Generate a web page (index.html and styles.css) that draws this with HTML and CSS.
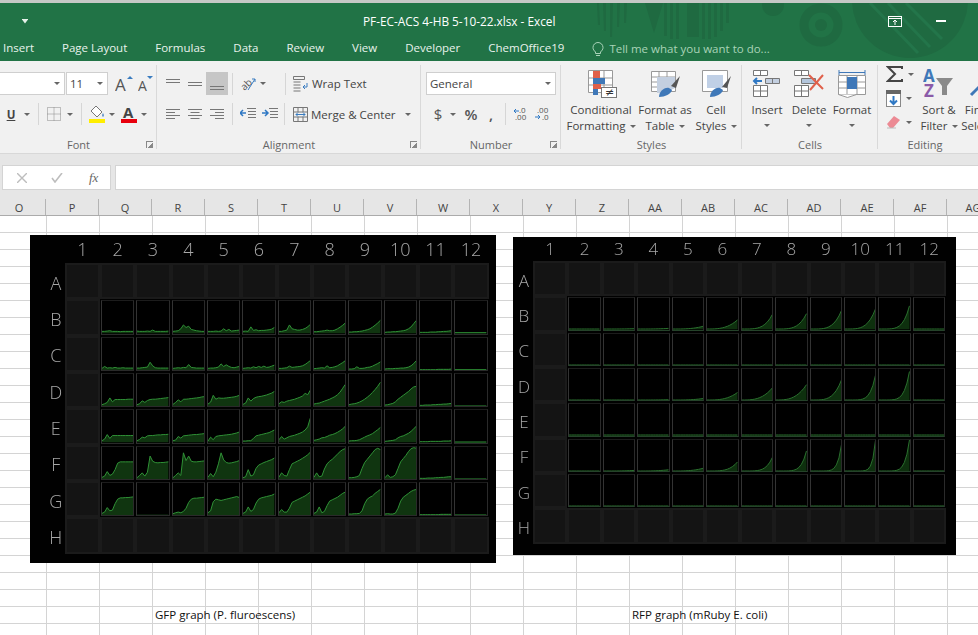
FILE: index.html
```html
<!DOCTYPE html>
<html lang="en">
<head>
    <meta charset="UTF-8">
    <meta name="viewport" content="width=device-width, initial-scale=1.0">
    <title>PF-EC-ACS 4-HB 5-10-22.xlsx - Excel</title>
    <link rel="stylesheet" href="styles.css">
</head>
<body>
    <header class="titlebar">
        <svg class="title-art" width="978" height="58" viewBox="0 0 978 58">
            <g fill="#1f6a41">
                <path d="M597 0h2l1 22h-2zM603 0h3v28h-2zM610 0h3l-1 34h-2zM617 0h3l-1 24h-2zM624 0h3l-1 20h-2z"/>
                <path d="M645 0h18l-9 30z"/>
                <path d="M664 0h3v33h-3zM670 0h3v36h-3zM676 0h3v36h-3zM687 0h12v34h-12zM702 0h3v36h-3zM708 0h3v36h-3zM714 0h3v34h-3zM720 0h3v28h-3zM726 0h3v20h-3z"/>
                <circle cx="773" cy="2" r="11"/>
            </g>
            <circle cx="821" cy="22" r="17" fill="none" stroke="#1f6a41" stroke-width="9"/>
            <circle cx="821" cy="22" r="6" fill="#1f6a41"/>
            <circle cx="910" cy="-3" r="58" fill="#1f6a41"/>
            <path d="M870 0l48 50M888 0l42 44M906 0l36 36" stroke="#23754a" stroke-width="3" fill="none"/>
        </svg>
        <div class="title-row">
            <span class="qat-arrow"></span>
            <span class="doc-title">PF-EC-ACS 4-HB 5-10-22.xlsx - Excel</span>
            <svg class="win-ribbon" width="14" height="11" viewBox="0 0 14 11">
                <rect x=".5" y=".5" width="13" height="10" fill="none" stroke="#fff"/>
                <path d="M0 2.500h14M7 9V4M5 6l2-2 2 2" stroke="#fff" fill="none"/>
            </svg>
            <span class="win-min"></span>
        </div>
        <nav class="tabs">
            <span>Insert</span>
            <span>Page Layout</span>
            <span>Formulas</span>
            <span>Data</span>
            <span>Review</span>
            <span>View</span>
            <span>Developer</span>
            <span>ChemOffice19</span>
            <span class="tell-me">
                <svg width="12" height="15" viewBox="0 0 12 15">
                    <path d="M3.500 10C2 8.500 1 7.500 1 5.500a5 5 0 0 1 10 0c0 2-1 3-2.500 4.500v1.500h-5zM4 13.500h4" fill="none" stroke="#a9d3b8"/>
                </svg>
                Tell me what you want to do...
            </span>
        </nav>
    </header>

    <section class="ribbon">
        <div class="group group-font">
            <div class="group-body">
                <div class="tool-row row-top">
                    <div class="combo combo-name"><span class="arrow"></span></div>
                    <div class="combo combo-size">11<span class="arrow"></span></div>
                    <svg class="font-grow" width="19" height="20" viewBox="0 0 19 20">
                        <text x="0" y="17" class="letter-big">A</text>
                        <path d="M12 5l3-3 3 3z" fill="#3a7cc0"/>
                    </svg>
                    <svg class="font-shrink" width="16" height="20" viewBox="0 0 16 20">
                        <text x="0" y="17" class="letter-small">A</text>
                        <path d="M9 2h6l-3 3z" fill="#3a7cc0"/>
                    </svg>
                </div>
                <div class="tool-row row-bottom">
                    <span class="underline-u">U</span>
                    <span class="arrow arrow-u"></span>
                    <span class="vsep sep-u"></span>
                    <svg class="icon-border" width="14" height="14" viewBox="0 0 14 14">
                        <path d="M.5.500h13v13H.5zM7 .5v13M.5 7h13" fill="none" stroke="#888" stroke-dasharray="1 1"/>
                    </svg>
                    <span class="arrow arrow-border"></span>
                    <span class="vsep sep-border"></span>
                    <svg class="icon-fill" width="16" height="19" viewBox="0 0 16 19">
                        <path d="M7 1l6 6-5 5-6-6z" fill="#fff" stroke="#777"/>
                        <path d="M14 8c1 2 1 3 0 4-1-1-1-2 0-4z" fill="#3a7cc0"/>
                        <rect y="14" width="16" height="4" fill="#ffee00"/>
                    </svg>
                    <span class="arrow arrow-fill"></span>
                    <svg class="icon-color" width="16" height="19" viewBox="0 0 16 19">
                        <text x="2" y="13" class="letter-color">A</text>
                        <rect y="14" width="16" height="4" fill="#e8000d"/>
                    </svg>
                    <span class="arrow arrow-color"></span>
                </div>
            </div>
            <div class="group-label">Font</div>
            <span class="launcher"></span>
        </div>

        <div class="group group-align">
            <div class="group-body">
                <div class="tool-row row-top">
                    <svg class="al-top" width="14" height="12" viewBox="0 0 14 12"><path d="M0 1.500h14M0 4.500h14" stroke="#777"/></svg>
                    <svg class="al-mid" width="14" height="12" viewBox="0 0 14 12"><path d="M0 4.500h14M0 7.500h14" stroke="#777"/></svg>
                    <span class="al-selected"><svg width="14" height="8" viewBox="0 0 14 8"><path d="M0 2.500h14M0 5.500h14" stroke="#777"/></svg></span>
                    <span class="vsep sep-al"></span>
                    <svg class="al-orient" width="17" height="17" viewBox="0 0 17 17">
                        <text x="0" y="13" class="letter-orient" transform="rotate(-45 6 9)">ab</text>
                        <path d="M8 15L15 4M12 4h3v3" stroke="#3a7cc0" fill="none"/>
                    </svg>
                    <span class="arrow arrow-orient"></span>
                    <span class="vsep sep-orient"></span>
                    <svg class="icon-wrap" width="16" height="16" viewBox="0 0 16 16">
                        <path d="M.5.5h11v3H.5zM.5 6h7M.5 9h7M.5 12h7M.5 15h7" fill="none" stroke="#777"/>
                        <path d="M10 11h4V7M10 11l2-2M10 11l2 2" fill="none" stroke="#3a7cc0"/>
                    </svg>
                    <span class="tool-text">Wrap Text</span>
                </div>
                <div class="tool-row row-bottom">
                    <svg class="al-left" width="14" height="11" viewBox="0 0 14 11"><path d="M0 .5h14M0 3.500h9M0 6.500h14M0 9.500h9" stroke="#777"/></svg>
                    <svg class="al-center" width="14" height="11" viewBox="0 0 14 11"><path d="M0 .5h14M2.500 3.500h9M0 6.500h14M2.500 9.500h9" stroke="#777"/></svg>
                    <svg class="al-right" width="14" height="11" viewBox="0 0 14 11"><path d="M0 .5h14M5 3.500h9M0 6.500h14M5 9.500h9" stroke="#777"/></svg>
                    <span class="vsep sep-al2"></span>
                    <svg class="in-dec" width="16" height="12" viewBox="0 0 16 12"><path d="M7 .5h9M8 3.500h8M8 6.500h8M8 9.500h8" fill="none" stroke="#777"/><path d="M0 5h6M3 2L0 5l3 3" fill="none" stroke="#2f78c4" stroke-width="1.500"/></svg>
                    <svg class="in-inc" width="16" height="12" viewBox="0 0 16 12"><path d="M7 .5h9M8 3.500h8M8 6.500h8M8 9.500h8" fill="none" stroke="#777"/><path d="M0 5h6M3 2l3 3-3 3" fill="none" stroke="#2f78c4" stroke-width="1.500"/></svg>
                    <span class="vsep sep-in"></span>
                    <svg class="icon-merge" width="15" height="15" viewBox="0 0 15 15">
                        <path d="M.5.5h14v14H.5zM.5 5h14M.5 10h14M5 .5V5M10 .5V5M5 10v4.500M10 10v4.500" fill="none" stroke="#777"/>
                        <path d="M3 7.500h9M3 7.500l2-2M3 7.500l2 2M12 7.500l-2-2M12 7.500l-2 2" fill="none" stroke="#3a7cc0"/>
                    </svg>
                    <span class="tool-text">Merge &amp; Center</span>
                    <span class="arrow arrow-merge"></span>
                </div>
            </div>
            <div class="group-label">Alignment</div>
            <span class="launcher"></span>
        </div>

        <div class="group group-number">
            <div class="group-body">
                <div class="tool-row row-top">
                    <div class="combo combo-format">General<span class="arrow"></span></div>
                </div>
                <div class="tool-row row-bottom">
                    <span class="num-sign num-dollar">$</span>
                    <span class="arrow arrow-dollar"></span>
                    <span class="num-sign num-percent">%</span>
                    <span class="num-sign num-comma">,</span>
                    <span class="vsep sep-num"></span>
                    <svg class="dec-more" width="15" height="14" viewBox="0 0 15 14">
                        <text x="5" y="6" class="letter-dec">.0</text>
                        <text x="1" y="13" class="letter-dec">.00</text>
                        <path d="M0 4h5M2 2L0 4l2 2" fill="none" stroke="#2f78c4"/>
                    </svg>
                    <svg class="dec-less" width="15" height="14" viewBox="0 0 15 14">
                        <text x="2" y="6" class="letter-dec">.00</text>
                        <text x="7" y="13" class="letter-dec">.0</text>
                        <path d="M0 10h5M3 8l2 2-2 2" fill="none" stroke="#2f78c4"/>
                    </svg>
                </div>
            </div>
            <div class="group-label">Number</div>
            <span class="launcher"></span>
        </div>

        <div class="group group-styles">
            <div class="group-body big-row">
                <div class="big-btn btn-cond">
                    <svg width="32" height="30" viewBox="0 0 32 30">
                        <path d="M3.500 1.500h24v22h-24zM3.500 9h24M3.500 16h24M11 1.500v22M19 1.500v22" fill="#fff" stroke="#999"/>
                        <rect x="8" y="2" width="7" height="7" fill="#e0604a"/>
                        <rect x="8" y="9" width="12" height="6" fill="#3f78b8"/>
                        <rect x="8" y="15" width="8" height="5" fill="#e0604a"/>
                        <rect x="8" y="20" width="5" height="6" fill="#3f78b8"/>
                        <rect x="16.500" y="18.500" width="15" height="10" fill="#fff" stroke="#777"/>
                        <text x="20" y="27" class="letter-ne">≠</text>
                    </svg>
                    <span>Conditional</span>
                    <span>Formatting<i class="arrow"></i></span>
                </div>
                <div class="big-btn btn-table">
                    <svg width="32" height="30" viewBox="0 0 32 30">
                        <path d="M2.500 2.500h24v20h-24zM2.500 8h24M2.500 13h24M2.500 18h24M10 2.500v20M18 2.500v20" fill="#fff" stroke="#999"/>
                        <path d="M8 8h18v11l-10 5H8z" fill="#c3cfe0"/>
                        <path d="M22 17l9-10-4 12z" fill="#555"/>
                        <path d="M10 28c0-5 5-10 10-9l3 2c-1 4-7 7-13 7z" fill="#3f78b8"/>
                    </svg>
                    <span>Format as</span>
                    <span>Table<i class="arrow"></i></span>
                </div>
                <div class="big-btn btn-cell">
                    <svg width="32" height="30" viewBox="0 0 32 30">
                        <path d="M2.500 1.500h25v21h-25z" fill="#fff" stroke="#999"/>
                        <rect x="7" y="6" width="16" height="13" fill="#c0d0e6"/>
                        <path d="M22 18l9-11-4 12z" fill="#555"/>
                        <path d="M10 28c0-5 5-10 10-9l3 2c-1 4-7 7-13 7z" fill="#3f78b8"/>
                    </svg>
                    <span>Cell</span>
                    <span>Styles<i class="arrow"></i></span>
                </div>
            </div>
            <div class="group-label">Styles</div>
        </div>

        <div class="group group-cells">
            <div class="group-body big-row">
                <div class="big-btn btn-insert">
                    <svg width="32" height="30" viewBox="0 0 32 30">
                        <path d="M2.500 1.500h14v5h-14zM9.500 1.500v5M2.500 16.500h14v11h-14zM2.500 22h14M9.500 16.500v11" fill="#fff" stroke="#777"/>
                        <path d="M14.500 9.500h14v5h-14zM21.500 9.500v5" fill="#c3cfe0" stroke="#777"/>
                        <path d="M3 12h8M6 9l-3 3 3 3" fill="none" stroke="#2f78c4" stroke-width="2"/>
                    </svg>
                    <span>Insert</span>
                    <i class="arrow"></i>
                </div>
                <div class="big-btn btn-delete">
                    <svg width="32" height="30" viewBox="0 0 32 30">
                        <path d="M1.500 1.500h14v5h-14zM8.500 1.500v5M1.500 16.500h14v11h-14zM1.500 22h14M8.500 16.500v11" fill="#fff" stroke="#777"/>
                        <path d="M8.500 9.500h14v5h-14z" fill="#b4c6dc" stroke="#777"/>
                        <path d="M16 6l14 14M30 6L17 21" fill="none" stroke="#e0604a" stroke-width="2"/>
                    </svg>
                    <span>Delete</span>
                    <i class="arrow"></i>
                </div>
                <div class="big-btn btn-format">
                    <svg width="32" height="30" viewBox="0 0 32 30">
                        <path d="M3 1v5M29 1v5M3 3.500h26" fill="none" stroke="#3f78b8"/>
                        <path d="M2.500 6.500h27v19h-27zM2.500 13h27M2.500 19h27M11 6.500v19M21 6.500v19" fill="#fff" stroke="#999"/>
                        <rect x="11" y="8" width="10" height="12" fill="#3f78b8"/>
                        <path d="M2.500 25.500l9 3 9-3" fill="#fff" stroke="#999"/>
                    </svg>
                    <span>Format</span>
                    <i class="arrow"></i>
                </div>
            </div>
            <div class="group-label">Cells</div>
        </div>

        <div class="group group-editing">
            <div class="group-body editing-body">
                <div class="edit-stack">
                    <div class="edit-item">
                        <svg width="17" height="16" viewBox="0 0 17 16"><path d="M16 3V1H2l7 7-7 7h14v-2" fill="none" stroke="#444" stroke-width="2"/></svg>
                        <span class="arrow"></span>
                    </div>
                    <div class="edit-item">
                        <svg width="15" height="17" viewBox="0 0 15 17">
                            <rect x=".5" y=".5" width="14" height="16" fill="#fff" stroke="#888"/>
                            <rect width="15" height="4" fill="#666"/>
                            <path d="M7.500 6v8M4 10.500l3.500 3.500 3.500-3.500" fill="none" stroke="#2f78c4" stroke-width="2"/>
                        </svg>
                        <span class="arrow"></span>
                    </div>
                    <div class="edit-item">
                        <svg width="15" height="14" viewBox="0 0 15 14">
                            <path d="M1 9l7-8 6 4-7 8H4z" fill="#ec8a94"/>
                            <path d="M1 13h9" stroke="#bbb"/>
                        </svg>
                        <span class="arrow"></span>
                    </div>
                </div>
                <div class="big-btn btn-sort">
                    <svg width="32" height="30" viewBox="0 0 32 30">
                        <text x="0" y="13" class="letter-az letter-a">A</text>
                        <text x="1" y="28" class="letter-az letter-z">Z</text>
                        <path d="M13 9h17l-6 8v9h-5v-9z" fill="#8a8a8a"/>
                    </svg>
                    <span>Sort &amp;</span>
                    <span>Filter<i class="arrow"></i></span>
                </div>
                <div class="big-btn btn-find">
                    <svg width="32" height="30" viewBox="0 0 32 30">
                        <circle cx="20" cy="11" r="7" fill="none" stroke="#3f78b8" stroke-width="2"/>
                        <path d="M15 16L5 26" stroke="#3f78b8" stroke-width="3"/>
                    </svg>
                    <span>Find &amp;</span>
                    <span>Select<i class="arrow"></i></span>
                </div>
            </div>
            <div class="group-label editing-label">Editing</div>
        </div>
    </section>

    <section class="formula-area">
        <div class="fx-box">
            <svg width="10" height="10" viewBox="0 0 10 10"><path d="M0 0l10 10M10 0L0 10" stroke="#bdbdbd" stroke-width="1.400"/></svg>
            <svg width="12" height="10" viewBox="0 0 12 10"><path d="M1 5l3 4 7-9" fill="none" stroke="#bdbdbd" stroke-width="1.600"/></svg>
            <span class="fx-label">fx</span>
        </div>
        <div class="formula-input"></div>
    </section>

    <div class="col-heads" id="colHeads"></div>

    <main class="sheet">
        <div class="caption caption-gfp">GFP graph (P. fluroescens)</div>
        <div class="caption caption-rfp">RFP graph (mRuby E. coli)</div>
        <div class="plate plate-gfp" id="gfpPlate"></div>
        <div class="plate plate-rfp" id="rfpPlate"></div>
    </main>

    <script src="script.js"></script>
</body>
</html>
```

FILE: styles.css
```css
* {
    box-sizing: border-box;
}
body {
    margin: 0;
    height: 635px;
    overflow: hidden;
    background: #fff;
    font-family: 'Open Sans', sans-serif;
    font-size: 11.5px;
    color: #444;
}

/* title bar + tabs */
.titlebar {
    position: relative;
    height: 61px;
    border-top: 3px solid #c6c8c6;
    background: #217346;
    color: #fff;
}
.title-art {
    position: absolute;
    left: 0;
    top: 0;
}
.title-row {
    position: relative;
    display: flex;
    align-items: center;
    height: 30px;
    padding-top: 6px;
}
.qat-arrow {
    width: 6px;
    height: 5px;
    margin-left: 22px;
    background: #e6f1ea;
    clip-path: polygon(0 0, 100% 0, 100% 20%, 50% 100%, 0 20%);
}
.doc-title {
    width: 193px;
    margin-left: 335px;
    font-size: 11.8px;
    white-space: nowrap;
}
.win-ribbon {
    margin-left: 332px;
}
.win-min {
    width: 10px;
    height: 2px;
    margin-left: 34px;
    background: #fff;
}
.tabs {
    position: relative;
    display: flex;
    gap: 28px;
    height: 28px;
    padding: 4px 0 0 3px;
    white-space: nowrap;
    line-height: 22px;
    color: #e8f2ec;
}
.tell-me {
    display: flex;
    align-items: center;
    gap: 5px;
    color: #a9d3b8;
}

/* ribbon */
.ribbon {
    display: flex;
    height: 93px;
    background: #f1f1f1;
    border-bottom: 1px solid #d8d8d8;
}
.group {
    position: relative;
    display: flex;
    flex: none;
    flex-direction: column;
    height: 92px;
    padding-top: 11px;
}
.group::after {
    content: '';
    position: absolute;
    right: 0;
    top: 4px;
    bottom: 4px;
    width: 1px;
    background: #d9d9d9;
}
.group-font { width: 157px; }
.group-align { width: 264px; }
.group-number { width: 140px; }
.group-styles { width: 181px; }
.group-cells { width: 136px; }
.group-editing { width: 100px; }
.group-editing::after { display: none; }
.group-body {
    flex: 1;
}
.group-label {
    height: 15px;
    line-height: 14px;
    text-align: center;
    font-size: 11px;
    color: #666;
}
.editing-label {
    width: 94px;
}
.launcher {
    position: absolute;
    right: 4px;
    bottom: 5px;
    width: 7px;
    height: 7px;
    border-left: 1px solid #888;
    border-top: 1px solid #888;
    background: linear-gradient(135deg, transparent 55%, #888 55%);
}
.tool-row {
    display: flex;
    align-items: center;
}
.row-top {
    height: 23px;
}
.row-bottom {
    height: 20px;
    margin-top: 9px;
}
.arrow {
    display: inline-block;
    flex: none;
    width: 0;
    height: 0;
    border-top: 3px solid #666;
    border-left: 3px solid transparent;
    border-right: 3px solid transparent;
}
.vsep {
    flex: none;
    width: 1px;
    height: 22px;
    background: #d6d6d6;
}
.combo {
    display: flex;
    align-items: center;
    justify-content: space-between;
    height: 23px;
    padding: 0 4px 0 3px;
    background: #fff;
    border: 1px solid #cfcfcf;
}
.combo-name {
    justify-content: flex-end;
    width: 65px;
    border-left: 0;
}
.combo-size {
    width: 42px;
    margin-left: 1px;
}
.combo-format {
    width: 130px;
    margin-left: 5px;
}
.font-grow { margin-left: 7px; }
.font-shrink { margin-left: 4px; }
.letter-big { font: 17px 'Open Sans', sans-serif; fill: #555; }
.letter-small { font: 14px 'Open Sans', sans-serif; fill: #555; }
.letter-color { font: bold 15px 'Open Sans', sans-serif; fill: #444; }
.letter-orient { font: 10px 'Open Sans', sans-serif; fill: #555; }
.letter-dec { font: 8px 'Open Sans', sans-serif; fill: #555; }
.letter-ne { font: 11px 'DejaVu Sans', sans-serif; fill: #333; }
.letter-az { font: bold 17px 'Open Sans', sans-serif; }
.letter-a { fill: #3f78b8; }
.letter-z { fill: #8a5aa8; }
.underline-u {
    width: 12px;
    margin-left: 5px;
    font-weight: bold;
    text-align: center;
    text-decoration: underline;
}
.arrow-u { margin-left: 7px; }
.sep-u { margin-left: 8px; }
.icon-border { margin-left: 8px; }
.arrow-border { margin-left: 6px; }
.sep-border { margin-left: 8px; }
.icon-fill { margin-left: 7px; }
.arrow-fill { margin-left: 4px; }
.icon-color { margin-left: 6px; }
.arrow-color { margin-left: 4px; }

.al-top { margin-left: 9px; }
.al-mid { margin-left: 8px; }
.al-selected {
    display: flex;
    align-items: flex-end;
    justify-content: center;
    width: 22px;
    height: 23px;
    margin-left: 4px;
    padding-bottom: 3px;
    background: #c6c6c6;
}
.sep-al { margin-left: 4px; }
.al-orient { margin-left: 7px; }
.arrow-orient { margin-left: 3px; }
.sep-orient { margin-left: 19px; }
.icon-wrap { margin-left: 7px; }
.tool-text {
    margin-left: 3px;
    white-space: nowrap;
}
.al-left { margin-left: 9px; }
.al-center { margin-left: 8px; }
.al-right { margin-left: 8px; }
.sep-al2 { margin-left: 8px; }
.in-dec { margin-left: 7px; }
.in-inc { margin-left: 6px; }
.sep-in { margin-left: 6px; }
.icon-merge { margin-left: 8px; }
.arrow-merge { margin-left: 9px; }

.num-sign {
    flex: none;
    font-size: 15px;
    color: #555;
}
.num-dollar { width: 10px; margin-left: 12px; text-align: center; }
.arrow-dollar { margin-left: 7px; }
.num-percent { width: 14px; margin-left: 8px; text-align: center; font-weight: 600; }
.num-comma { width: 6px; margin-left: 11px; font-weight: 600; }
.sep-num { margin-left: 10px; }
.dec-more { margin-left: 8px; }
.dec-less { margin-left: 6px; }

.big-row {
    display: flex;
}
.big-btn {
    display: flex;
    flex: none;
    flex-direction: column;
    align-items: center;
    margin-top: -3px;
    line-height: 16px;
    white-space: nowrap;
}
.big-btn svg {
    margin-bottom: 3px;
}
.big-btn .arrow {
    margin-left: 4px;
    vertical-align: 2px;
}
.big-btn > .arrow {
    margin: 6px 0 0;
}
.btn-cond { width: 70px; margin-left: 5px; }
.btn-table { width: 58px; }
.btn-cell { width: 44px; }
.btn-insert { width: 42px; margin-left: 4px; }
.btn-delete { width: 42px; }
.btn-format { width: 44px; }
.editing-body {
    display: flex;
}
.edit-stack {
    display: flex;
    flex: none;
    flex-direction: column;
    gap: 8px;
    width: 42px;
    margin-top: -6px;
    padding-left: 8px;
}
.edit-item {
    display: flex;
    align-items: center;
    gap: 5px;
}
.btn-sort { width: 36px; margin-left: 1px; }
.btn-find { width: 36px; margin-left: 7px; }

/* formula bar */
.formula-area {
    display: flex;
    gap: 4px;
    height: 45px;
    padding: 11px 0 9px 2px;
    background: #e6e6e6;
}
.fx-box {
    display: flex;
    align-items: center;
    width: 109px;
    padding-left: 14px;
    gap: 24px;
    background: #fff;
    border: 1px solid #d4d4d4;
}
.fx-label {
    margin-left: 2px;
    font: italic 13px 'Liberation Serif', serif;
    color: #666;
}
.formula-input {
    flex: 1;
    background: #fff;
    border: 1px solid #d4d4d4;
    border-right: 0;
}

/* column letters */
.col-heads {
    display: flex;
    height: 17px;
    margin-left: -7px;
    background: #e6e6e6;
    border-bottom: 1px solid #ababab;
}
.col-heads span {
    flex: none;
    width: 53px;
    line-height: 17px;
    text-align: center;
    font-size: 11px;
    border-right: 1px solid #b4b4b4;
}

/* worksheet: same 53 x 17 cells as the column heads */
.sheet {
    position: relative;
    display: grid;
    grid-template-columns: 46px repeat(18, 53px);
    grid-auto-rows: 17px;
    height: 419px;
    background-image: linear-gradient(to right, #d4d4d4 1px, transparent 1px), linear-gradient(#d4d4d4 1px, transparent 1px);
    background-size: 53px 17px;
    background-position: 46px 16px;
}
.caption {
    grid-row: 24;
    padding-left: 3px;
    line-height: 15px;
    font-size: 11.5px;
    white-space: nowrap;
    color: #111;
}
.caption-gfp { grid-column: 4; }
.caption-rfp { grid-column: 13; }

/* the two plate pictures float over the cells */
.plate {
    position: absolute;
    display: grid;
    gap: 2px;
    background: #010101;
    font-weight: 300;
    color: #a8a8a8;
}
.plate-gfp {
    left: 30px;
    top: 19px;
    width: 466px;
    height: 328px;
    grid-template-columns: 33.7px repeat(12, 33.33px);
    grid-template-rows: 27px repeat(8, 34.33px);
    font-size: 18px;
}
.plate-rfp {
    left: 513px;
    top: 21px;
    width: 443px;
    height: 318px;
    grid-template-columns: 18.8px repeat(12, 32.47px);
    grid-template-rows: 23px repeat(8, 33.33px);
    font-size: 17px;
}
.plate-head {
    display: flex;
    align-items: center;
    justify-content: center;
    filter: grayscale(1);
}
.plate-gfp .row-name {
    padding: 3px 0 0 18px;
}
.plate-rfp .row-name {
    padding: 3px 0 0 3px;
}
.well {
    border: 1px solid #2a2a2a;
    border-top-color: #1c1c1c;
    border-left-color: #333;
    background: #000;
    overflow: hidden;
}
.well svg {
    display: block;
    width: 100%;
    height: 100%;
}
.well-blank {
    border-color: #1b1b1b;
    background: #141414;
    box-shadow: 0 0 0 1px #1b1b1b;
}
.plate-rfp .well-data {
    border-bottom-color: #25432a;
}
.curve-fill {
    fill: #103510;
}
.curve-line {
    fill: none;
    stroke: #2f9136;
    stroke-width: 1;
    vector-effect: non-scaling-stroke;
}
.plate-rfp .curve-fill {
    fill: #0e300e;
}
.plate-rfp .curve-line {
    stroke: #2a6f2e;
}
```

FILE: script.js
```js
const colNames = ['O', 'P', 'Q', 'R', 'S', 'T', 'U', 'V', 'W', 'X', 'Y', 'Z', 'AA', 'AB', 'AC', 'AD', 'AE', 'AF', 'AG']
const rowNames = ['A', 'B', 'C', 'D', 'E', 'F', 'G', 'H']

// heights in % of the well, columns 2 to 12, rows B to G
const gfpData = [
    ['6 6 7 8 6 6 6 5 6 6 6 6 6', '7 6 6 6 7 6 10 6 6 6 6 6 7', '6 7 8 14 26 18 22 12 10 8 7 6 6', '6 6 6 7 6 7 14 8 12 7 8 9 10',
     '6 7 6 20 9 11 8 9 9 10 11 13 18', '6 6 8 10 26 14 12 10 10 12 15 20 28', '5 5 6 7 8 10 8 8 10 14 19 25 32', '4 4 5 5 6 7 9 11 14 19 25 32 40',
     '3 4 4 5 5 6 7 8 10 14 20 30 40', '3 3 3 3 4 4 4 5 5 6 6 7 8', '2 2'],
    ['6 12 7 8 7 9 7 7 8 7 7 7 7', '7 7 8 9 10 25 14 8 7 7 7 7 7', '6 7 8 7 9 8 18 9 8 7 7 7 7', '6 7 7 8 10 20 12 17 12 9 8 10 12',
     '6 7 8 7 11 8 12 9 13 9 10 13 16', '6 6 7 8 13 9 10 11 12 14 18 24 30', '5 6 7 8 7 14 8 9 11 14 19 24 30', '4 4 5 11 6 6 7 9 10 13 17 21 26',
     '4 5 5 5 6 6 7 7 8 10 14 21 30', '2 2 2 2 2 2 2 3 3 3 3 3 4', '2 2'],
    ['5 8 12 26 14 21 21 21 21 21 22 22 22', '5 8 17 12 18 21 22 22 23 24 25 26 27', '6 12 20 14 22 22 23 24 25 26 27 29 30', '7 13 34 22 26 25 25 26 27 28 29 31 34',
     '6 10 26 16 24 28 30 31 33 35 38 41 46', '8 14 12 16 18 20 22 25 28 32 40 36 50', '7 9 10 13 16 19 22 26 30 36 44 56 68', '5 7 8 10 13 17 22 28 35 43 52 62 74',
     '4 5 7 9 14 22 28 34 40 46 54 60 62', '3 3 4 4 4 5 5 6 6 7 7 8 9', '1 1'],
    ['5 10 24 12 21 21 21 21 21 21 21 21 21', '5 9 16 14 20 21 21 22 23 23 24 24 25', '5 7 18 13 20 21 22 23 24 24 25 26 27', '4 16 8 18 20 21 22 23 24 25 27 29 32',
     '4 4 5 5 12 20 22 24 26 28 30 34 38', '8 18 10 14 18 20 22 25 28 32 38 48 75', '6 8 10 14 15 18 22 24 27 31 36 42 50', '4 5 5 6 8 12 16 20 23 27 33 39 46',
     '3 4 5 6 8 14 18 20 24 28 34 42 50', '2 2 2 2 3 3 3 3 3 4 4 4 5', '1 1'],
    ['6 10 24 12 16 30 50 54 54 54 54 54 54', '5 12 20 10 22 72 56 52 51 52 52 53 54', '5 12 20 12 82 58 72 56 54 54 55 56 57', '6 18 8 22 48 82 60 52 50 51 53 55 58',
     '5 8 30 10 14 34 44 48 52 55 58 61 66', '7 20 12 10 30 48 52 56 60 65 70 76 84', '6 20 8 10 32 48 56 62 70 78 86 92 95', '5 5 6 8 12 34 52 62 72 82 92 96 92',
     '5 14 6 8 14 34 54 64 74 86 95 98 96', '3 3 3 4 4 4 5 5 6 6 7 8 8', '1 1'],
    ['6 10 24 14 16 36 50 54 54 55 55 56 57', '0 0', '5 8 10 8 12 22 40 50 53 53 54 55 56', '8 14 42 50 48 46 48 50 52 54 56 58 55',
     '6 10 26 12 18 38 50 54 56 58 60 62 66', '8 18 10 10 22 40 44 48 52 56 60 66 72', '6 10 26 8 12 30 44 48 52 56 62 68 72', '4 4 5 5 6 14 36 50 56 60 68 74 80',
     '4 5 4 4 7 22 44 56 62 68 74 78 80', '2 2 2 2 2 2 2 2 3 3 3 3 3', '1 1']
]

// [end height, steepness] per well, columns 2 to 12, rows B to G
const flatRow = Array(11).fill([1, 1])
const rfpData = [
    [[1, 3], [2, 3], [3, 3], [10, 3], [30, 3], [48, 4], [50, 4], [60, 4], [65, 4], [75, 5], [1, 1]],
    flatRow,
    [[1, 1], [1, 1], [2, 3], [6, 3], [25, 3], [40, 3], [50, 3], [65, 4], [80, 6], [92, 6], [1, 1]],
    flatRow,
    [[1, 1], [3, 3], [5, 3], [10, 3], [30, 4], [45, 5], [65, 6], [85, 8], [98, 10], [100, 7], [1, 1]],
    flatRow
]

function rfpHeights(end, steepness) {
    const heights = []
    for (let i = 0; i <= 12; i++) {
        heights.push(1 + (end - 1) * Math.pow(i / 12, steepness))
    }
    return heights
}

function curveSvg(heights) {
    const points = heights.map((h, i) => `${(i * 100 / (heights.length - 1)).toFixed(1)},${100 - h}`).join(' ')
    return `<svg viewBox="0 0 100 100" preserveAspectRatio="none">
        <polygon class="curve-fill" points="0,100 ${points} 100,100"></polygon>
        <polyline class="curve-line" points="${points}"></polyline>
    </svg>`
}

function addCell(plate, className, html) {
    const cell = document.createElement('div')
    cell.className = className
    cell.innerHTML = html
    plate.appendChild(cell)
}

function buildPlate(id, heightsFor) {
    const plate = document.getElementById(id)
    addCell(plate, 'plate-head', '')
    for (let c = 1; c <= 12; c++) {
        addCell(plate, 'plate-head', c)
    }
    rowNames.forEach((name, r) => {
        addCell(plate, 'plate-head row-name', name)
        for (let c = 0; c < 12; c++) {
            if (c === 0 || r === 0 || r === 7) {
                addCell(plate, 'well well-blank', '')
            } else {
                addCell(plate, 'well well-data', curveSvg(heightsFor(r - 1, c - 1)))
            }
        }
    })
}

document.getElementById('colHeads').innerHTML = colNames.map(name => `<span>${name}</span>`).join('')
buildPlate('gfpPlate', (r, c) => gfpData[r][c].split(' ').map(Number))
buildPlate('rfpPlate', (r, c) => rfpHeights(rfpData[r][c][0], rfpData[r][c][1]))
```
